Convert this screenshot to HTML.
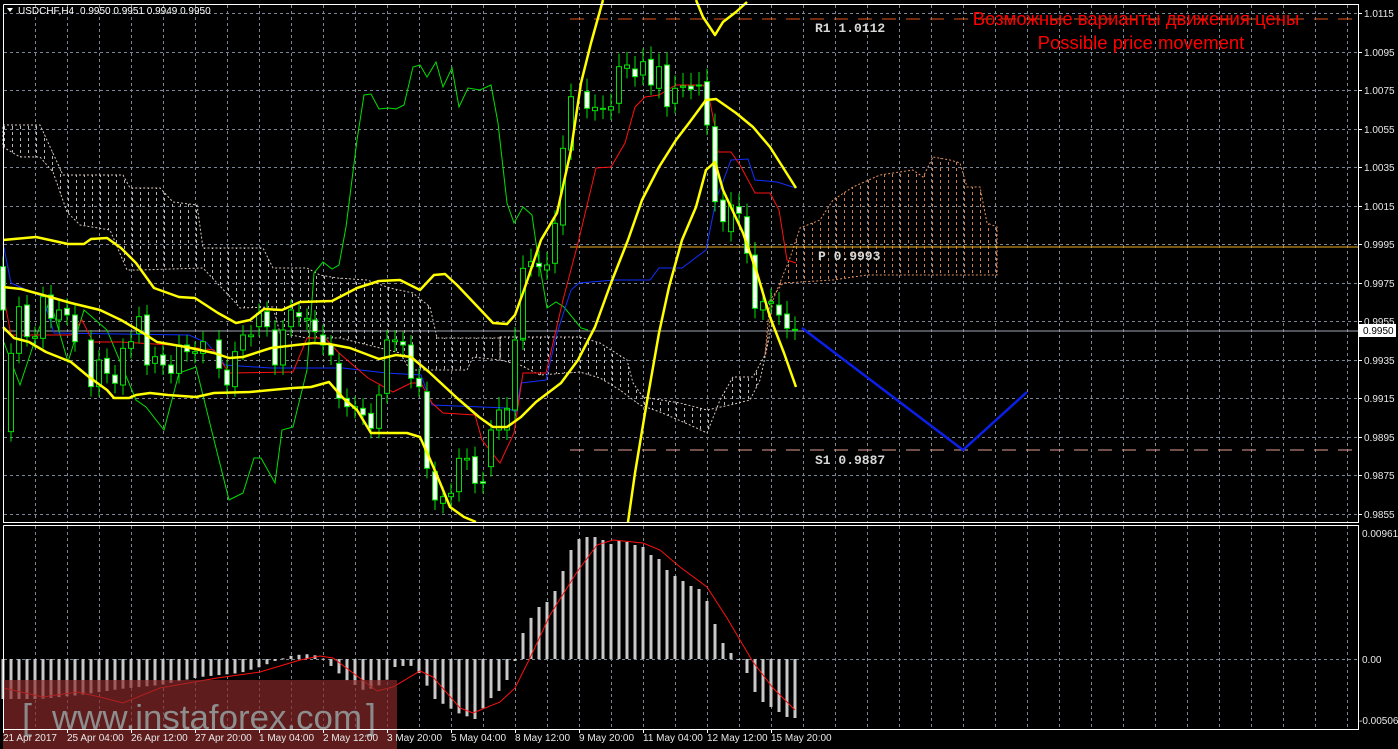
<!DOCTYPE html>
<html><head><meta charset="utf-8"><style>
html,body{margin:0;padding:0;background:#000;width:1398px;height:749px;overflow:hidden}
svg{display:block}
text{font-family:"Liberation Sans","DejaVu Sans",sans-serif}
.mono{font-family:"Liberation Mono","DejaVu Sans Mono",monospace;font-weight:bold}
</style></head><body>
<svg id="s" width="1398" height="749" xmlns="http://www.w3.org/2000/svg">
<defs>
<pattern id="pw" width="8" height="6" patternUnits="userSpaceOnUse"><line x1="4.5" y1="0" x2="4.5" y2="3" stroke="#b8b8b8" stroke-width="1"/></pattern>
<pattern id="po" width="8" height="6" patternUnits="userSpaceOnUse"><line x1="4.5" y1="0" x2="4.5" y2="3" stroke="#c88050" stroke-width="1"/></pattern>
</defs>
<rect width="1398" height="749" fill="#000"/>
<g id="grid" stroke="#7a8595" stroke-width="1" stroke-dasharray="3,3"></g>

<polygon fill="url(#pw)" stroke="#d8c8c0" stroke-width="1" stroke-dasharray="2,2" points="3,125 40,125 63,175 123,175 130,188 160,188 173,202 197,205 203,248 263,248 273,268 307,268 320,275 337,278 367,280 390,288 413,293 430,307 437,338 500,338 500,360 473,357 467,370 440,370 410,370 400,353 340,338 307,338 280,333 273,307 240,308 233,300 203,268 140,270 127,270 110,230 80,225 67,212 53,172 40,157 20,157 3,147"/>
<polygon fill="url(#pw)" stroke="#d8c8c0" stroke-width="1" stroke-dasharray="2,2" points="500,337 580,337 600,343 627,360 633,383 643,397 680,403 707,410 730,405 750,400 760,380 773,320 765,355 753,377 733,377 720,400 707,433 690,425 660,412 640,405 620,390 600,378 580,372 540,375 520,365 500,360"/>
<polygon fill="url(#po)" stroke="#e09060" stroke-width="1" stroke-dasharray="2,2" points="773,300 790,258 800,228 820,220 833,200 853,187 880,175 913,170 923,177 933,157 950,160 960,163 967,187 980,187 987,223 997,227 997,275 867,275 833,280 783,283 770,300 765,355"/>

<line x1="570" y1="19" x2="1358" y2="19" stroke="#e0541c" stroke-dasharray="14,10"/>
<line x1="570" y1="450" x2="1358" y2="450" stroke="#e0a090" stroke-dasharray="14,10"/>
<line x1="570" y1="247" x2="1358" y2="247" stroke="#f0b020" stroke-width="1"/>
<line x1="3" y1="331" x2="1358" y2="331" stroke="#a0a8b0" stroke-width="1"/>

<polyline fill="none" stroke="#00e000" stroke-width="1" points="3,340 20,385 36,337 50,300 68,362 84,310 107,330 136,400 146,407 164,430 179,373 196,367 214,440 229,500 243,493 254,458 261,458 275,483 282,430 293,427 307,370 314,273 323,262 332,269 339,265 346,227 357,140 364,95 371,94 379,109 389,108 396,109 404,105 413,67 420,65 427,77 436,62 443,87 452,68 459,107 468,88 480,90 491,85 498,123 507,203 514,223 523,207 532,215 537,250 547,308 556,302 564,307 581,328 588,330"/>
<polyline fill="none" stroke="#1030ff" stroke-width="1" points="3,243 11,283 43,297 54,333 189,335 207,343 225,365 271,368 343,368 386,373 421,375 432,405 507,408 516,412 521,383 546,380 557,333 571,290 579,283 615,280 650,280 659,268 682,268 706,250 716,200 731,160 748,159 755,180 777,182 796,188"/>
<polyline fill="none" stroke="#ff1010" stroke-width="1" points="3,293 11,335 71,335 82,320 93,342 121,342 171,345 214,350 229,373 293,372 307,338 325,338 339,353 368,378 393,392 411,383 421,383 432,403 443,413 475,415 482,440 500,463 514,433 523,373 546,373 563,300 578,243 596,168 611,167 625,143 635,107 645,97 659,95 676,85 703,85 708,92 715,127 718,152 731,152 740,165 755,193 770,193 779,210 787,260 796,263"/>

<g id="candles"></g>

<g fill="none" stroke="#ffff00" stroke-width="2.5" stroke-linejoin="round">
<polyline points="3,240 36,237 68,244 84,244 91,239 107,238 121,248 136,263 154,288 179,297 195,298 218,313 236,323 250,320 264,309 282,310 300,302 332,301 357,288 379,281 400,280 420,290 434,275 445,274 457,285 493,323 507,324 515,315 524,290 541,240 557,213 571,150 581,83 591,43 603,0"/>
<polyline points="3,287 21,289 43,295 71,303 100,310 121,320 143,333 157,342 186,347 214,353 229,358 243,357 271,348 296,345 314,343 329,344 350,348 379,359 396,355 411,357 429,372 457,398 479,417 493,427 507,427 521,417 536,402 561,383 578,360 595,327 611,283 628,240 642,200 659,167 676,140 689,123 706,100 716,99 736,113 753,127 770,147 796,188"/>
<polyline points="3,327 14,338 29,342 46,352 71,362 89,377 107,390 114,398 129,398 136,395 150,393 168,395 196,397 214,393 250,392 271,390 293,388 311,387 329,382 343,398 357,410 371,433 386,433 407,433 420,437 429,457 436,473 450,507 464,517 476,522"/>
<polyline points="628,522 635,473 645,413 659,333 669,287 682,240 696,207 706,170 715,162 723,190 743,233 757,273 770,317 784,353 796,387"/>
<polyline points="696,0 703,17 715,35 723,22 736,12 747,2"/>
</g>

<polyline fill="none" stroke="#0a20e8" stroke-width="2.5" points="802,328 963,450 1027,392"/>

<g font-size="13" fill="#d8d8d8">
<text class="mono" x="815" y="32">R1 1.0112</text>
<text class="mono" x="818" y="260">P 0.9993</text>
<text class="mono" x="815" y="464">S1 0.9887</text>
</g>
<text x="1136" y="25" fill="#ff0000" font-size="18.5" text-anchor="middle">Возможные варианты движения цены</text>
<text x="1141" y="49" fill="#ff0000" font-size="18.5" text-anchor="middle">Possible price movement</text>

<g id="macd"></g>
<polyline id="sig" fill="none" stroke="#ff1010" stroke-width="1"/>

<rect x="3" y="680" width="394" height="69" fill="#8a2a2a" fill-opacity="0.68"/>
<text x="22" y="729" fill="#8a8a8a" font-size="36">[</text>
<text x="52" y="729" fill="#8e8e8e" font-size="34" textLength="310" lengthAdjust="spacingAndGlyphs">www.instaforex.com</text>
<text x="366" y="729" fill="#8a8a8a" font-size="36">]</text>

<g stroke="#fff" stroke-width="1" fill="none">
<polyline points="3.5,4.5 1358.5,4.5 1358.5,522.5 3.5,522.5 3.5,4.5"/>
<polyline points="3.5,525.5 1358.5,525.5 1358.5,729.5 3.5,729.5 3.5,525.5"/>
</g>
<g id="axis" font-size="10" fill="#e8e8e8"></g>
<polygon points="7,8 13,8 10,12" fill="#fff"/>
<text x="18" y="14" font-size="10" fill="#fff">USDCHF,H4</text>
<text x="80" y="14" font-size="10" fill="#fff">0.9950 0.9951 0.9949 0.9950</text>
<rect x="1359" y="324" width="37" height="13" fill="#fff"/>
<text x="1363" y="334" font-size="10" fill="#000">0.9950</text>
</svg>
<script>
var NS="http://www.w3.org/2000/svg";
function el(p,t,a,txt){var e=document.createElementNS(NS,t);for(var k in a)e.setAttribute(k,a[k]);if(txt!=null)e.textContent=txt;p.appendChild(e);return e;}
var g=document.getElementById('grid');
for(var x=35;x<1358;x+=32){el(g,'line',{x1:x+.5,y1:5,x2:x+.5,y2:522});el(g,'line',{x1:x+.5,y1:526,x2:x+.5,y2:729});}
for(var i=0;i<14;i++){var y=Math.round(13+i*38.5)+.5;el(g,'line',{x1:4,y1:y,x2:1358,y2:y});}
el(g,'line',{x1:4,y1:659.5,x2:1358,y2:659.5});
var c=document.getElementById('candles');
function cand(x,t,b,w,wt,wb){if(b-t<1)b=t+1;el(c,'line',{x1:x,y1:wt,x2:x,y2:wb,stroke:'#00e000','stroke-width':1});
el(c,'rect',{x:x-2.5,y:t,width:5,height:b-t,fill:w?'#fff':'#000',stroke:'#00e000','stroke-width':1});}
var A=[[8,680,810,1],[32,940,1175,0],[55,800,940,0],[78,795,890,1],[100,890,895,0],[122,770,895,0],[145,765,835,1],[167,810,840,0],[190,805,825,1],[210,825,905,1],[255,900,1040,1],[278,960,1040,0],[300,955,1000,1],[322,1005,1030,1],[345,925,1035,0],[368,905,925,0],[390,830,880,0],[412,825,975,1],[435,950,970,0],[457,945,975,1],[480,975,1000,1],[500,915,1000,0],[525,915,935,1],[548,935,940,0],[570,905,940,0],[615,900,985,1],[637,990,1035,1],[658,935,1040,0],[682,885,930,0],[705,885,890,0],[727,820,860,0],[750,815,860,1],[770,870,975,1],[793,870,975,0],[815,810,860,0],[838,818,830,1],[860,835,840,0],[882,840,875,1],[905,885,915,1],[928,915,945,1],[950,970,1075,1],[972,1075,1100,1],[995,1100,1105,0],[1018,1105,1125,1],[1040,1120,1165,1],[1060,1065,1165,0],[1083,900,1060,0],[1105,900,905,0],[1130,905,915,1],[1150,915,1015,1],[1175,1015,1040,1],[1197,1055,1285,1],[1218,1295,1380,1],[1240,1370,1390,0],[1262,1360,1370,0],[1285,1255,1355,0],[1308,1255,1260,0],[1330,1250,1330,1],[1352,1325,1330,1],[1375,1170,1280,0],[1398,1165,1170,0],[1420,1105,1170,0],[1440,900,1110,0],[1465,690,900,0]];
A.forEach(function(a){var x=Math.round(a[0]/2.8/8)*8+3,t=a[1]/3+40,b=a[2]/3+40;cand(x,t,b,a[3],t-10,b+10);});
var B=[[0,1230,1290,0],[20,1230,1290,0],[45,1020,1230,0],[70,805,1015,0],[95,785,800,0],[115,790,800,1],[140,795,810,0],[165,670,790,0],[188,445,675,0],[212,290,450,0],[258,275,325,1],[283,322,332,0],[305,325,327,0],[330,320,330,0],[355,200,310,0],[377,195,205,0],[400,207,230,1],[423,185,225,0],[448,178,255,1],[470,200,265,0],[495,195,320,1],[518,265,310,0],[542,258,262,0],[566,258,268,1],[590,255,257,0],[614,245,375,1],[636,380,605,1],[660,600,665,1],[684,615,695,0],[708,620,640,1],[733,650,760,1],[756,765,925,1],[779,905,930,0],[803,905,910,0],[826,915,945,1],[850,942,985,1],[876,988,990,0]];
B.forEach(function(a){var x=Math.round((a[0]/2.96+500-3)/8)*8+3,t=a[1]/3,b=a[2]/3;cand(x,t,b,a[3],t-13,b+10);});
var m=document.getElementById('macd');
function interp(pts,x){for(var i=0;i<pts.length-1;i++){if(x>=pts[i][0]&&x<=pts[i+1][0]){var f=(x-pts[i][0])/(pts[i+1][0]-pts[i][0]);return pts[i][1]+f*(pts[i+1][1]-pts[i][1]);}}return pts[pts.length-1][1];}
var H=[[3,40],[40,40],[80,36],[120,30],[160,26],[200,18],[240,14],[260,8],[275,2],[290,-3],[305,-5],[320,-3],[330,6],[345,20],[365,32],[385,24],[395,8],[410,6],[420,15],[435,40],[460,55],[475,60],[490,40],[500,31],[507,21],[515,2],[523,-26],[532,-43],[539,-52],[547,-57],[555,-68],[563,-88],[571,-109],[579,-120],[587,-122],[595,-122],[603,-119],[611,-115],[619,-118],[627,-117],[635,-114],[643,-112],[651,-104],[659,-100],[667,-89],[675,-83],[683,-78],[691,-73],[699,-70],[707,-58],[715,-35],[723,-16],[731,-6],[739,1],[747,14],[755,33],[763,43],[771,48],[779,53],[787,58],[795,59]];
for(var x=3;x<=795;x+=8){var v=interp(H,x);var y0=659,y1=659+v;el(m,'rect',{x:x-1.5,y:Math.min(y0,y1),width:3,height:Math.max(1,Math.abs(v)),fill:'#c8c8c8'});}
var S=[[3,688],[43,697],[77,692],[100,697],[123,703],[160,688],[217,678],[260,672],[300,660],[320,656],[333,658],[353,673],[377,691],[393,687],[420,671],[433,677],[460,708],[473,713],[500,702],[515,688],[530,658],[550,615],[577,572],[597,545],[613,540],[643,543],[660,550],[680,567],[707,587],[727,618],[753,662],[773,688],[795,710]];
document.getElementById('sig').setAttribute('points',S.map(function(p){return p.join(',')}).join(' '));
var ax=document.getElementById('axis');
var pr=['1.0115','1.0095','1.0075','1.0055','1.0035','1.0015','0.9995','0.9975','0.9955','0.9935','0.9915','0.9895','0.9875','0.9855'];
pr.forEach(function(p,i){var y=Math.round(13+i*38.5);el(ax,'line',{x1:1358,y1:y+.5,x2:1362,y2:y+.5,stroke:'#fff'});el(ax,'text',{x:1364,y:y+4},p);});
el(ax,'text',{x:1362,y:537},'0.00961');el(ax,'text',{x:1362,y:663},'0.00');el(ax,'text',{x:1359,y:724},'-0.00506');
var tl=['21 Apr 2017','25 Apr 04:00','26 Apr 12:00','27 Apr 20:00','1 May 04:00','2 May 12:00','3 May 20:00','5 May 04:00','8 May 12:00','9 May 20:00','11 May 04:00','12 May 12:00','15 May 20:00'];
tl.forEach(function(t,i){var x=3+i*64;el(ax,'line',{x1:x+.5,y1:729,x2:x+.5,y2:733,stroke:'#fff'});el(ax,'text',{x:x,y:741},t);});
</script>
</body></html>
